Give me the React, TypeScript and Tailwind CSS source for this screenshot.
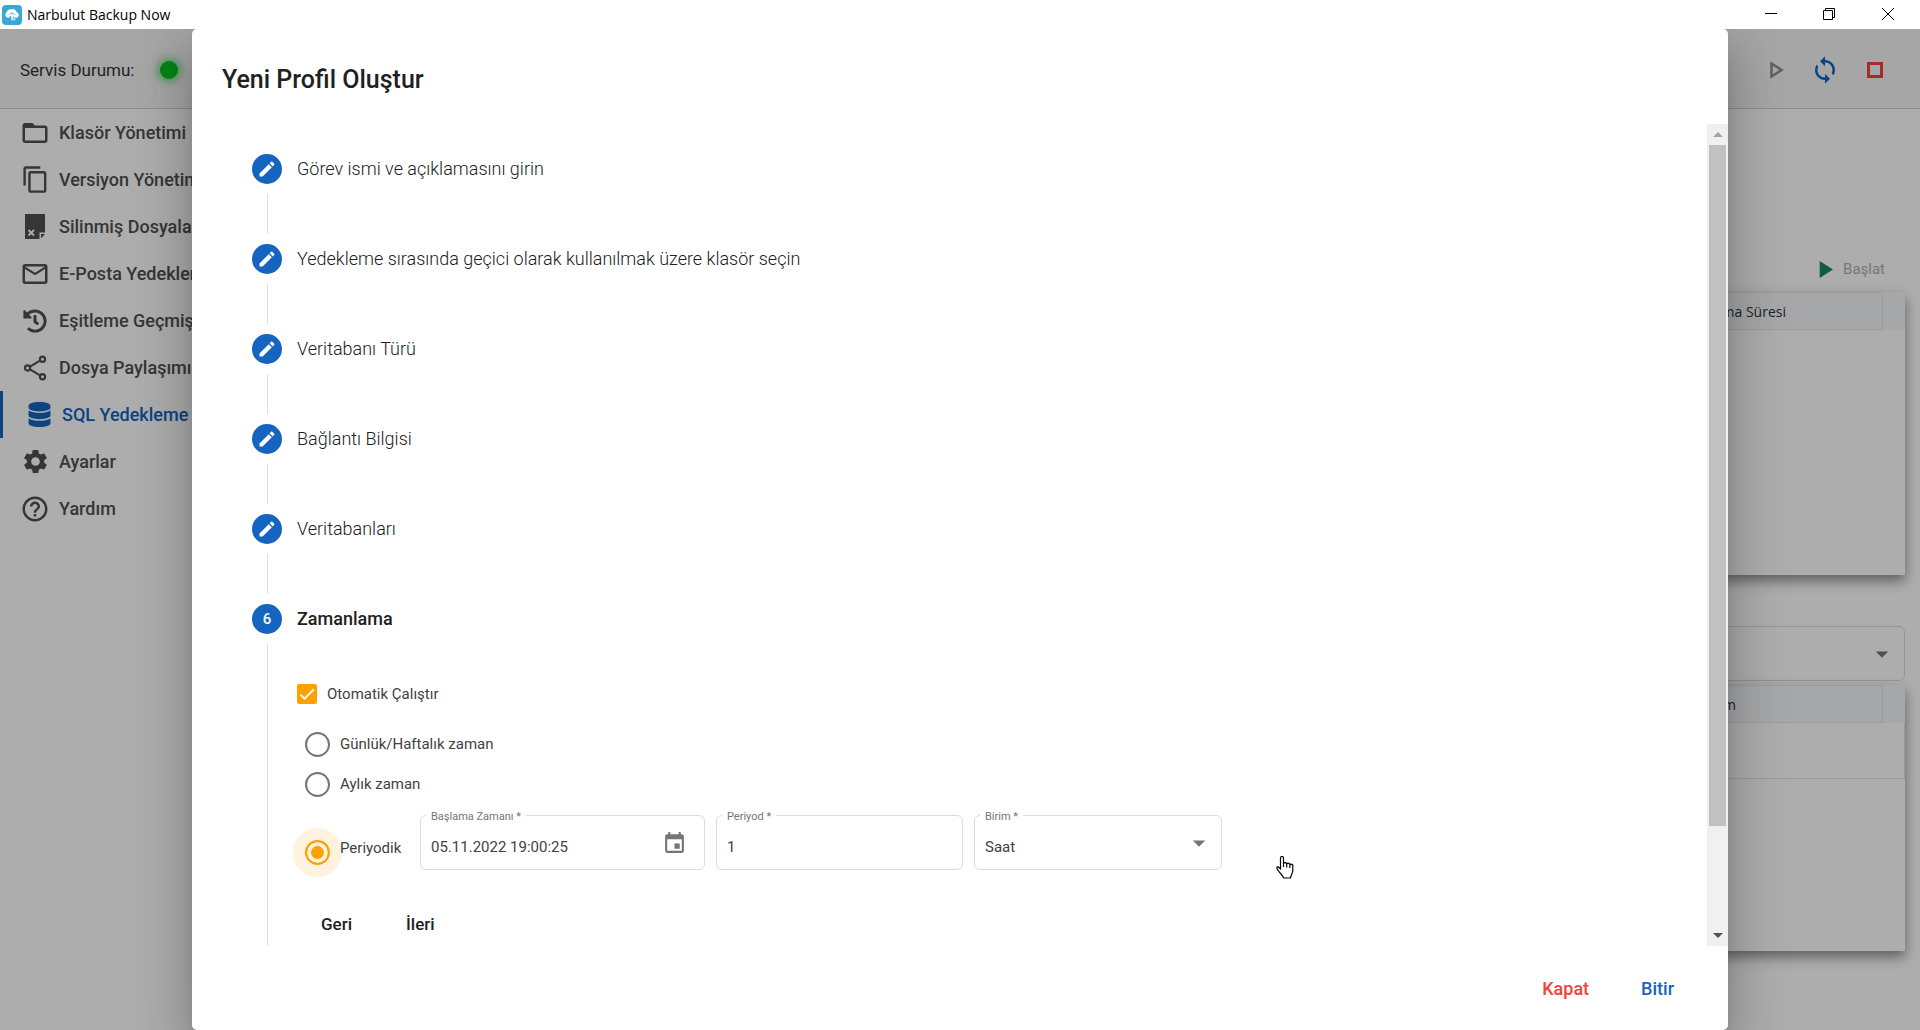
import React, { useState } from "react";
import {
  MdArrowDropDown,
  MdContentCopy,
  MdCreate,
  MdEvent,
  MdFolderOpen,
  MdHelpOutline,
  MdMailOutline,
  MdPlayArrow,
  MdSettings,
  MdSync,
} from "react-icons/md";
import { FaDatabase, FaHistory } from "react-icons/fa";

function LogoIcon() {
  return (
    <svg viewBox="0 0 20 20" className="size-5" aria-hidden="true">
      <rect width="20" height="20" rx="4" fill="#3ba7d8" />
      <path
        d="M6 12.800a3.200 3.200 0 0 1-1-6 3.200 3.200 0 0 1 4.200-2.300 3.600 3.600 0 0 1 5.300 2.500 3 3 0 0 1 .5 5.700h-2.200l-1.300-1.500-.8 1.200v3.200l-1.400-.3v-3.500l-1.200-1-1 2z"
        fill="#fff"
      />
      <path d="M10 10V7.200M12.700 9.600 11.400 8M7.300 9.400 8.800 7.800" stroke="#3ba7d8" strokeWidth="0.900" />
      <path d="M12 12.500v2.300h1.400" stroke="#fff" strokeWidth="1.100" fill="none" />
    </svg>
  );
}

function DeletedFileIcon() {
  return (
    <svg viewBox="0 0 20 25" className="h-[25px] w-5" aria-hidden="true">
      <path d="M0 0h20v18.500h-5.500V25H0z" fill="currentColor" />
      <path d="M16 24.500V20h4z" fill="currentColor" />
      <path d="M3.500 16l5.500 5.500M9 16l-5.500 5.500" stroke="#fff" strokeWidth="1.800" />
    </svg>
  );
}

function ShareIcon() {
  return (
    <svg viewBox="0 0 24 26" className="h-[26px] w-6" fill="none" stroke="currentColor" strokeWidth="2.200" aria-hidden="true">
      <circle cx="4.500" cy="13" r="2.600" />
      <circle cx="19.500" cy="4.300" r="2.600" />
      <circle cx="19.500" cy="21.700" r="2.600" />
      <path d="M7 11.600 17 5.600M7 14.400 17 20.400" />
    </svg>
  );
}

const menu = [
  { label: "Klasör Yönetimi", icon: <MdFolderOpen size={30} /> },
  { label: "Versiyon Yönetimi", icon: <MdContentCopy size={29} /> },
  { label: "Silinmiş Dosyalar", icon: <DeletedFileIcon /> },
  { label: "E-Posta Yedekleri", icon: <MdMailOutline size={30} /> },
  { label: "Eşitleme Geçmişi", icon: <FaHistory size={24} /> },
  { label: "Dosya Paylaşımı", icon: <ShareIcon /> },
  { label: "SQL Yedekleme", icon: <FaDatabase size={25} />, active: true },
  { label: "Ayarlar", icon: <MdSettings size={29} /> },
  { label: "Yardım", icon: <MdHelpOutline size={30} /> },
];

const doneSteps = [
  "Görev ismi ve açıklamasını girin",
  "Yedekleme sırasında geçici olarak kullanılmak üzere klasör seçin",
  "Veritabanı Türü",
  "Bağlantı Bilgisi",
  "Veritabanları",
];

function TitleBar() {
  return (
    <header className="flex h-[29px] shrink-0 items-center justify-between bg-white pl-0.5 text-black">
      <div className="flex items-center gap-[5px]">
        <LogoIcon />
        <h1 className="font-['Open_Sans',sans-serif] text-[14px] leading-5">Narbulut Backup Now</h1>
      </div>
      <div className="flex h-7 self-start pr-0.5">
        <button type="button" aria-label="Simge durumuna küçült" className="flex w-[58px] items-center justify-center">
          <svg viewBox="0 0 12 12" className="size-3" shapeRendering="crispEdges" aria-hidden="true">
            <path d="M0 5h12v1H0z" />
          </svg>
        </button>
        <button type="button" aria-label="Önceki boyut" className="flex w-[58px] items-center justify-center">
          <svg viewBox="0 0 12 12" className="size-3" fill="none" stroke="#000" aria-hidden="true">
            <path d="M.5 2.500h9v9h-9zM2.500 2.500v-2h9v9h-2" />
          </svg>
        </button>
        <button type="button" aria-label="Kapat" className="flex w-[60px] items-center justify-center">
          <svg viewBox="0 0 12 12" className="size-3" fill="none" stroke="#000" aria-hidden="true">
            <path d="M0 0l12 12M12 0L0 12" />
          </svg>
        </button>
      </div>
    </header>
  );
}

function StatusBar() {
  return (
    <div className="flex h-20 shrink-0 items-center justify-between border-b border-[#d0d0d0] bg-[#f5f5f5] pl-5 pr-[30px] pt-[3px]">
      <div className="flex items-center gap-[22px] text-[17px] text-[#333]">
        <span className="min-w-[118px] pt-0.5">Servis Durumu:</span>
        <span className="size-[18px] rounded-full bg-[#00c31f] shadow-[0_0_8px_3px_#00c31f80]" />
      </div>
      <div className="flex items-center gap-5">
        <button type="button" aria-label="Başlat" className="flex size-[30px] items-center justify-end pr-1.5 text-[#8f8f8f]">
          <svg viewBox="0 0 14 18" className="h-[18px] w-3.5" fill="none" stroke="currentColor" strokeWidth="2.500" aria-hidden="true">
            <path d="M1.500 2.500v13l10-6.500z" />
          </svg>
        </button>
        <button type="button" aria-label="Eşitle" className="text-[#1263c0]">
          <MdSync size={30} />
        </button>
        <button type="button" aria-label="Durdur" className="flex size-[30px] items-center justify-center">
          <span className="size-4 border-[3px] border-[#f44336]" />
        </button>
      </div>
    </div>
  );
}

function Sidebar() {
  return (
    <nav className="w-[250px] shrink-0 overflow-hidden">
      <ul>
        {menu.map((m) => (
          <li key={m.label}>
            <a
              href="#"
              className={
                m.active
                  ? "flex h-[47px] items-center gap-2 whitespace-nowrap border-l-[3px] border-[#1263c0] pl-[21px] text-[18px] font-[480] leading-6 text-[#1263c0]"
                  : "flex h-[47px] items-center gap-[9px] whitespace-nowrap pl-5 text-[18px] font-[480] leading-6 text-[#505050]"
              }
            >
              <span className="flex w-[30px] justify-center">{m.icon}</span>
              {m.label}
            </a>
          </li>
        ))}
      </ul>
    </nav>
  );
}

function GridCard({ column, children, className }: { column: string; children?: React.ReactNode; className: string }) {
  return (
    <section className={className}>
      <div className="flex h-[38px] bg-[#f4f7fa] pr-[22px]">
        <div className="flex flex-1 items-center justify-end border border-[#e2e8ed] font-['Open_Sans',sans-serif] text-[14px] text-[#333]">
          {column}
        </div>
      </div>
      {children}
    </section>
  );
}

function Main() {
  return (
    <main className="flex min-w-0 flex-1 flex-col pl-5 pr-[15px] pt-[139px]">
      <div className="mb-px flex h-[43px] items-center justify-end pr-5">
        <button type="button" disabled className="flex items-center gap-1 text-[15px] text-[#b0b0b0]">
          <MdPlayArrow size={29} className="text-[#1a8a56]" />
          Başlat
        </button>
      </div>
      <GridCard
        column="Tamamlanma Süresi"
        className="h-[283px] bg-white shadow-[0_6px_12px_rgba(0,0,0,0.45)] [&>div>div]:pr-[96px]"
      />
      <div className="mt-[51px]">
        <button
          type="button"
          aria-label="Profil"
          className="flex h-[55px] w-full items-center justify-end rounded-md border border-[#dcdcdc] pr-[7px] text-[#757575]"
        >
          <MdArrowDropDown size={30} />
        </button>
      </div>
      <GridCard
        column="Durum"
        className="mt-1 h-[266px] bg-white shadow-[0_6px_12px_rgba(0,0,0,0.45)] [&>div>div]:pr-[146px]"
      >
        <div className="h-14 border-b border-r border-[#dfe5ea]" />
      </GridCard>
    </main>
  );
}

function StepCircle({ children }: { children: React.ReactNode }) {
  return (
    <span className="flex size-[30px] shrink-0 items-center justify-center rounded-full bg-[#1565c0] text-[15px] font-medium text-white">
      {children}
    </span>
  );
}

function Field({ label, id, className, children }: { label: string; id: string; className: string; children: React.ReactNode }) {
  return (
    <div className={className}>
      <label htmlFor={id} className="absolute -top-[7px] left-[5px] bg-white px-[5px] text-[11px] leading-4 text-[#757575]">
        {label}
      </label>
      {children}
    </div>
  );
}

const radioClass =
  "size-[25px] appearance-none rounded-full border-2 border-[#757575] bg-white checked:border-[#ffa000] checked:bg-[#ffa000] checked:shadow-[inset_0_0_0_4px_#fff3e0,0_0_0_12px_#fff3e0]";

function RadioRow({ label, value, mode, onChange }: { label: string; value: string; mode: string; onChange: (v: string) => void }) {
  return (
    <label className="flex items-center gap-[10px]">
      <input type="radio" name="mode" checked={mode === value} onChange={() => onChange(value)} className={radioClass} />
      {label}
    </label>
  );
}

function ScheduleForm() {
  const [mode, setMode] = useState("periodic");
  const [auto, setAuto] = useState(true);
  const box = "relative flex h-[55px] items-center rounded-md border border-[#dcdcdc] pl-2.5 text-[15px] text-[#424242]";
  return (
    <form className="ml-[15px] flex-1 border-l border-[#dcdcdc] pl-[29px] pt-10 text-[15px] text-[#424242]">
      <label className="flex h-5 items-center gap-2.5">
        <span className="relative size-5">
          <input
            type="checkbox"
            checked={auto}
            onChange={() => setAuto(!auto)}
            className="block size-5 appearance-none rounded-xs border-2 border-[#757575] checked:border-[#ffa000] checked:bg-[#ffa000]"
          />
          <svg viewBox="0 0 24 24" className="pointer-events-none absolute inset-0" fill="none" stroke="#fff" strokeWidth="2.200" aria-hidden="true">
            <path d="M4.100 12.700 9 17.600 20.300 6.300" />
          </svg>
        </span>
        Otomatik Çalıştır
      </label>
      <div className="flex flex-col gap-[15px] pl-2 pt-7">
        <RadioRow label="Günlük/Haftalık zaman" value="daily" mode={mode} onChange={setMode} />
        <RadioRow label="Aylık zaman" value="monthly" mode={mode} onChange={setMode} />
      </div>
      <div className="mt-[18px] flex items-center gap-[11px] pl-2">
        <label className="flex w-[104px] shrink-0 items-start gap-[10px] pt-5">
          <input
            type="radio"
            name="mode"
            checked={mode === "periodic"}
            onChange={() => setMode("periodic")}
            className={radioClass}
          />
          <span className="relative leading-4">Periyodik</span>
        </label>
        <div className="flex gap-[11px]">
          <Field id="start" label="Başlama Zamanı *" className={box + " w-[285px]"}>
            <input id="start" defaultValue="05.11.2022 19:00:25" className="w-full min-w-0 pt-2.5 outline-none" />
            <button type="button" aria-label="Takvim" className="pr-[17px] pt-0.5 text-[#757575]">
              <MdEvent size={25} />
            </button>
          </Field>
          <Field id="period" label="Periyod *" className={box + " w-[247px]"}>
            <input id="period" defaultValue="1" className="w-full min-w-0 pt-2.5 outline-none" />
          </Field>
          <Field id="unit" label="Birim *" className={box + " w-[248px]"}>
            <select id="unit" className="w-full appearance-none pt-2.5 outline-none">
              <option>Saat</option>
            </select>
            <MdArrowDropDown size={30} className="pointer-events-none absolute right-[7px] top-3 text-[#757575]" />
          </Field>
        </div>
      </div>
      <div className="mt-9 flex gap-[14px] pl-1 text-[17px] font-medium text-[#212121]">
        <button type="button" className="h-[37px] px-5">
          Geri
        </button>
        <button type="button" className="h-[37px] px-5">
          İleri
        </button>
      </div>
    </form>
  );
}

function ScrollBar() {
  return (
    <div className="flex w-[21px] shrink-0 flex-col items-center bg-[#f0f0f0]" aria-hidden="true">
      <div className="flex h-[21px] items-center">
        <span className="border-x-[5px] border-b-[5px] border-x-transparent border-b-[#a3a3a3]" />
      </div>
      <div className="w-[17px] flex-[680] bg-[#c1c1c1]" />
      <div className="flex-[99]" />
      <div className="flex h-[21px] items-center">
        <span className="border-x-[5px] border-t-[5px] border-x-transparent border-t-[#505050]" />
      </div>
    </div>
  );
}

function HandCursor() {
  return (
    <svg viewBox="0 0 18 23" className="h-[23px] w-[18px]" fill="#fff" stroke="#000" strokeWidth="1.200" strokeLinejoin="round" aria-hidden="true">
      <path d="M4.500 13V2a1.500 1.500 0 0 1 3 0v6a1.500 1.500 0 0 1 3.200.4 1.500 1.500 0 0 1 3.100.9 1.500 1.500 0 0 1 3 1.200v3.500c0 4-2 5-2.300 8H7.500C7 19 3 17 1 12.500c-.5-1.700 1-2.200 2-1zM7.500 7.500V11M10.700 8.500v3M13.800 9.500v2.500" />
    </svg>
  );
}

function ProfileDialog() {
  return (
    <section
      role="dialog"
      aria-label="Yeni Profil Oluştur"
      className="absolute inset-y-0 left-[10%] flex w-4/5 flex-col rounded-[5px] bg-white shadow-[0_14px_19px_-9px_rgba(0,0,0,0.2),0_30px_48px_4px_rgba(0,0,0,0.14),0_11px_58px_10px_rgba(0,0,0,0.12)]"
    >
      <h2 className="px-[30px] pb-6 pt-[31px] text-[25px] font-medium leading-10 text-[#212121]">Yeni Profil Oluştur</h2>
      <div className="flex min-h-0 flex-1">
        <div className="relative flex min-w-0 flex-1 flex-col overflow-hidden pl-[60px] pt-[30px]">
          {doneSteps.map((s) => (
            <div key={s}>
              <div className="flex items-center gap-[15px] text-[18px] font-[360] leading-7 text-[#212121]">
                <StepCircle>
                  <MdCreate size={20} />
                </StepCircle>
                {s}
              </div>
              <div className="my-2.5 ml-[15px] h-10 border-l border-[#dcdcdc]" />
            </div>
          ))}
          <div className="mb-2.5 flex items-center gap-[15px] text-[18px] font-[480] leading-7 text-[#212121]">
            <StepCircle>6</StepCircle>
            Zamanlama
          </div>
          <ScheduleForm />
          <div className="absolute bottom-[67px] left-[1084px]">
            <HandCursor />
          </div>
        </div>
        <ScrollBar />
      </div>
      <footer className="flex h-[84px] items-center justify-end gap-3 pr-[34px] text-[18px] font-[480]">
        <button type="button" className="h-[45px] px-5 text-[#f44336]">
          Kapat
        </button>
        <button type="button" className="h-[45px] px-5 text-[#1565c0]">
          Bitir
        </button>
      </footer>
    </section>
  );
}

export default function App() {
  return (
    <div className="flex h-screen flex-col overflow-hidden bg-white font-['Roboto',sans-serif]">
      <TitleBar />
      <div className="relative flex min-h-0 flex-1 flex-col overflow-hidden">
        <StatusBar />
        <div className="flex min-h-0 flex-1">
          <Sidebar />
          <Main />
        </div>
        <div className="absolute inset-0 bg-black/32" />
        <ProfileDialog />
      </div>
    </div>
  );
}
